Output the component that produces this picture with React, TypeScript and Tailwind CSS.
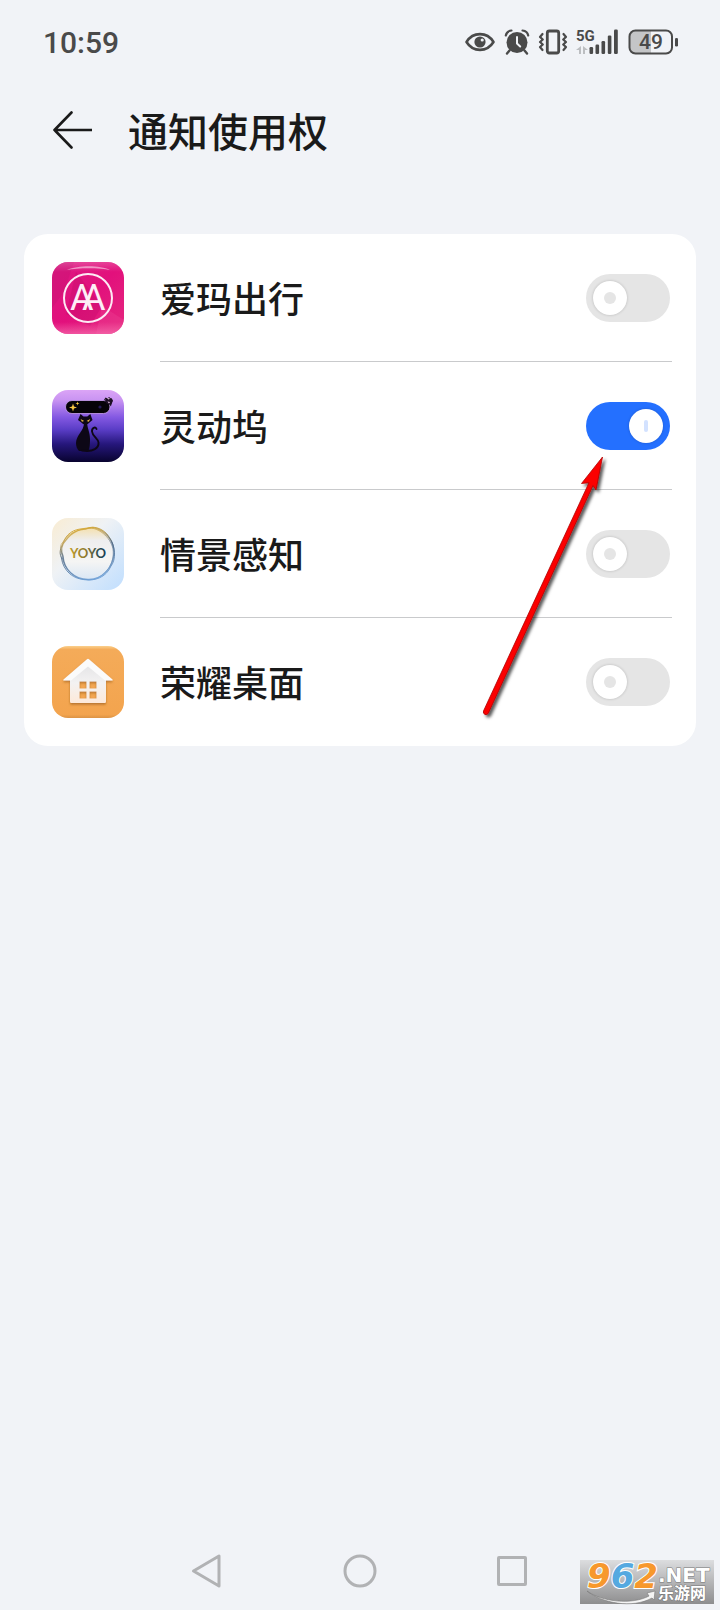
import React, { useState } from 'react';

interface AppEntry {
  id: string;
  name: string;
  icon: React.FC;
}

const AimaIcon: React.FC = () => (
  <svg viewBox="0 0 72 72" className="size-18 shrink-0" aria-hidden="true">
    <defs>
      <linearGradient id="aima-bg" x1="0" y1="0" x2="1" y2="1">
        <stop offset="0" stopColor="#dc1a82" />
        <stop offset="0.5" stopColor="#e2107c" />
        <stop offset="1" stopColor="#e5287f" />
      </linearGradient>
      <linearGradient id="aima-shine" x1="0" y1="0" x2="0" y2="1">
        <stop offset="0" stopColor="#fff" stopOpacity="0.2" />
        <stop offset="1" stopColor="#fff" stopOpacity="0" />
      </linearGradient>
      <linearGradient id="aima-base" x1="0" y1="0" x2="0" y2="1">
        <stop offset="0" stopColor="#f97cb6" stopOpacity="0" />
        <stop offset="1" stopColor="#f97cb6" stopOpacity="0.6" />
      </linearGradient>
      <clipPath id="aima-clip">
        <rect width="72" height="72" rx="16" />
      </clipPath>
    </defs>
    <g clipPath="url(#aima-clip)">
      <rect width="72" height="72" fill="url(#aima-bg)" />
      <path d="M0 0h22L12 30 0 46z" fill="#c4106f" opacity="0.35" />
      <path d="M24 10L50 44 38 64 14 52z" fill="#c60c6b" opacity="0.4" />
      <path d="M50 44l22 14v14H44z" fill="#f04a98" opacity="0.3" />
      <path d="M15 8C26 3 48 3 58 8 48 5.500 26 5.500 15 8z" fill="#fff" opacity="0.5" />
      <rect y="60" width="72" height="12" fill="url(#aima-base)" />
      <rect width="72" height="10" fill="url(#aima-shine)" />
    </g>
    <circle cx="36" cy="36" r="24" fill="none" stroke="#fdeaf4" strokeWidth="2" />
    <text y="48" fill="#fdeef6" fontFamily="Roboto, sans-serif" fontSize="36" fontWeight="400">
      <tspan x="18">A</tspan>
      <tspan x="30">A</tspan>
    </text>
  </svg>
);

const DockIcon: React.FC = () => (
  <svg viewBox="0 0 72 72" className="size-18 shrink-0" aria-hidden="true">
    <defs>
      <linearGradient id="dock-bg" x1="0" y1="0" x2="0" y2="1">
        <stop offset="0" stopColor="#dba4f6" />
        <stop offset="0.14" stopColor="#c994f2" />
        <stop offset="0.38" stopColor="#8358e2" />
        <stop offset="0.55" stopColor="#5a3dc6" />
        <stop offset="0.75" stopColor="#26177c" />
        <stop offset="1" stopColor="#08032f" />
      </linearGradient>
    </defs>
    <rect width="72" height="72" rx="16" fill="url(#dock-bg)" />
    <path d="M52 10l1.500-2.500 2 1L57 7l4 3-1 3-1 3-3 1-3-2z" fill="#1c0f24" />
    <path d="M55 10.500l3-.5 1 2-2 1.500-2-1z" fill="#e7c4e4" />
    <rect x="13.500" y="10.500" width="44.500" height="13" rx="6.500" fill="#050308" stroke="#c9a0f3" strokeWidth="0.800" />
    <path d="M53 10l5 1 1-2-3-1z" fill="#e7c4e4" />
    <path d="M53 11l1.500-3 2 1.500L59.500 8l1 3.500-2 3.500-4-1.500z" fill="#1c0f24" />
    <path d="M55.500 11.500l2.500.5-1 1.500z" fill="#e7c4e4" />
    <path d="M21 13.500l1 3 3 1-3 1-1 3-1-3-3-1 3-1z" fill="#f7c744" />
    <path d="M25.500 11.500l.5 1.500 1.500.5-1.500.5-.5 1.500-.5-1.500-1.500-.5 1.500-.5z" fill="#f7c744" />
    <circle cx="48" cy="17" r="1.600" fill="#241a55" />
    {/* cat */}
    <path d="M28.500 24l3 2.500h3.800l3-2.500 2.200 6-3 2.500c-1 1.300-2.500 2-4.100 2s-3.100-.7-4.100-2L26 30z" fill="#0d0716" />
    <path d="M28.500 29l3.700 2-2.200.8zM38.300 29l-3.700 2 2.200.8z" fill="#eab646" />
    <path d="M32 33h3.200c0 5 2.800 9 2.800 16 0 6-.5 9-1.500 12H27c-2-2-3-5-3-8 0-8 8-12 8-20z" fill="#0d0716" />
    <path d="M30 60.500c12 2 17-3 16.500-8-.5-4.500-6-6-6.500-11-.3-3.500 3.500-5.500 4.500-2.500" fill="none" stroke="#0d0716" strokeWidth="1.900" strokeLinecap="round" />
  </svg>
);

const YoyoIcon: React.FC = () => (
  <svg viewBox="0 0 72 72" className="size-18 shrink-0" aria-hidden="true">
    <defs>
      <linearGradient id="yoyo-bg" x1="0" y1="0" x2="1" y2="1">
        <stop offset="0" stopColor="#f9ecd2" />
        <stop offset="0.4" stopColor="#eff2f5" />
        <stop offset="1" stopColor="#c0defe" />
      </linearGradient>
      <linearGradient id="yoyo-ball" x1="0" y1="0" x2="0" y2="1">
        <stop offset="0" stopColor="#f4dfac" />
        <stop offset="0.25" stopColor="#eeeeef" />
        <stop offset="0.65" stopColor="#f5f5f4" />
        <stop offset="1" stopColor="#dae7f5" />
      </linearGradient>
      <linearGradient id="yoyo-ring" x1="0.3" y1="0" x2="0.6" y2="1">
        <stop offset="0" stopColor="#d9a829" />
        <stop offset="0.22" stopColor="#b99b52" />
        <stop offset="0.45" stopColor="#4c6683" />
        <stop offset="1" stopColor="#6d9fd6" />
      </linearGradient>
      <linearGradient id="yoyo-text" x1="0" y1="0" x2="1" y2="0">
        <stop offset="0" stopColor="#c29e2c" />
        <stop offset="0.5" stopColor="#877430" />
        <stop offset="0.75" stopColor="#35504e" />
        <stop offset="1" stopColor="#163b53" />
      </linearGradient>
    </defs>
    <rect width="72" height="72" rx="16" fill="url(#yoyo-bg)" />
    <circle cx="36" cy="35.500" r="26" fill="url(#yoyo-ball)" />
    <g fill="none" stroke="url(#yoyo-ring)">
      <path d="M12 23C16 13 26 10 34 11 40 7 52 10 57 19 64 28 64 42 59 48 54 60 42 63 34 61.500 22 62 11 53 9.500 40 6 33 10 28 12 23z" strokeWidth="0.900" />
      <path d="M14 22C22 11 30 12 41 9.500 54 12 62 23 62 35 61 50 50 62 36 61.500 22 61 12 52 11 38 8 31 10 26 14 22z" strokeWidth="1.300" opacity="0.8" />
      <path d="M11 24C16 15 24 13 32 10.500 46 7 59 20 61 31 63 45 54 58 41 61.500 26 65 11 52 10 37 8 30 8 27 11 24z" strokeWidth="0.800" opacity="0.8" />
    </g>
    <text x="36" y="40" textAnchor="middle" fill="url(#yoyo-text)" fontFamily="Lato, sans-serif" fontSize="13" fontWeight="700">YOYO</text>
  </svg>
);

const HomeIcon: React.FC = () => (
  <svg viewBox="0 0 72 72" className="size-18 shrink-0" aria-hidden="true">
    <defs>
      <linearGradient id="home-body" x1="0" y1="0" x2="0" y2="1">
        <stop offset="0" stopColor="#e3e3e5" />
        <stop offset="0.5" stopColor="#f3f2f2" />
        <stop offset="1" stopColor="#fde9d9" />
      </linearGradient>
      <linearGradient id="home-bg" x1="0" y1="0" x2="0" y2="1">
        <stop offset="0" stopColor="#fbd08c" />
        <stop offset="0.05" stopColor="#f4ab59" />
        <stop offset="0.95" stopColor="#f3a44e" />
        <stop offset="1" stopColor="#dc9345" />
      </linearGradient>
      <filter id="home-shadow" x="-20%" y="-20%" width="140%" height="140%">
        <feDropShadow dx="0" dy="1.500" stdDeviation="1" floodColor="#8a5010" floodOpacity="0.6" />
      </filter>
    </defs>
    <rect width="72" height="72" rx="16" fill="url(#home-bg)" />
    <g filter="url(#home-shadow)">
      <path fillRule="evenodd" fill="url(#home-body)" d="M36 17L18 32v23.500q0 1.500 1.500 1.500h33q1.500 0 1.500-1.500V32zM27.500 35.500h7v7h-7zM37.500 35.500h7v7h-7zM27.500 45.500h7v7h-7zM37.500 45.500h7v7h-7z" />
      <path d="M35 13.200q1-.8 2 0L60.500 33.500q1 1-.5 1H53L36 20.500 19 34.500h-7q-1.500 0-.5-1z" fill="#fbfbfb" />
    </g>
  </svg>
);

const apps: AppEntry[] = [
  { id: 'aima', name: '爱玛出行', icon: AimaIcon },
  { id: 'dock', name: '灵动坞', icon: DockIcon },
  { id: 'scene', name: '情景感知', icon: YoyoIcon },
  { id: 'launcher', name: '荣耀桌面', icon: HomeIcon },
];

const StatusBar: React.FC = () => (
  <header className="flex h-21 items-center justify-between pr-10 pl-[43px] text-[#4a4a4a]">
    <time className="pt-0.5 font-['Roboto',sans-serif] text-3xl font-medium">10:59</time>
    <div className="flex items-center gap-2">
      <svg viewBox="0 0 32 26" className="h-[26px] w-8" aria-label="护眼模式" role="img">
        <path d="M2.500 13C9 2.500 23 2.500 29.500 13 23 23.500 9 23.500 2.500 13z" fill="none" stroke="currentColor" strokeWidth="2.600" strokeLinejoin="round" />
        <circle cx="16" cy="13" r="5.600" fill="currentColor" />
        <circle cx="18.200" cy="11" r="1.600" fill="#f1f3f7" />
      </svg>
      <svg viewBox="0 0 26 26" className="size-[26px]" aria-label="闹钟" role="img">
        <circle cx="13" cy="13.500" r="10.500" fill="currentColor" />
        <path d="M1.800 6.500C2.300 3.800 4.500 1.800 7.500 1.500M24.200 6.500C23.700 3.800 21.500 1.800 18.500 1.500" fill="none" stroke="currentColor" strokeWidth="2.200" strokeLinecap="round" />
        <path d="M5.500 21.500L3 24.500M20.500 21.500l2.500 3" stroke="currentColor" strokeWidth="2.400" strokeLinecap="round" />
        <path d="M13 8v6.500l3.200 3" fill="none" stroke="#f1f3f7" strokeWidth="2" strokeLinecap="round" strokeLinejoin="round" />
      </svg>
      <svg viewBox="0 0 30 26" className="h-[26px] w-[30px]" aria-label="振动" role="img">
        <rect x="9.300" y="2" width="11.400" height="22" rx="2" fill="none" stroke="currentColor" strokeWidth="2.800" />
        <path d="M4.500 5L2 8l2.800 2.500L2 13l2.800 2.500L2 18l2.500 3M25.500 5L28 8l-2.800 2.500L28 13l-2.800 2.500L28 18l-2.500 3" fill="none" stroke="currentColor" strokeWidth="2.200" strokeLinejoin="round" strokeLinecap="round" />
      </svg>
      <svg viewBox="0 0 42 26" className="h-[26px] w-[42px]" aria-label="5G 信号" role="img">
        <text x="0" y="12" fill="currentColor" fontFamily="Roboto, sans-serif" fontSize="15" fontWeight="700">5G</text>
        <path d="M0 21l5-4v8H3v-4zM12 21l-5-4v8h2v-4z" fill="#bcbec1" />
        <g fill="currentColor">
          <rect x="13.500" y="18" width="3.600" height="7" rx="1.200" />
          <rect x="19.500" y="15.500" width="3.600" height="9.500" rx="1.200" />
          <rect x="25.500" y="12" width="3.600" height="13" rx="1.200" />
          <rect x="31.800" y="6.500" width="3.600" height="18.500" rx="1.200" />
          <rect x="38" y="0.500" width="3.800" height="24.500" rx="1.200" />
        </g>
      </svg>
      <svg viewBox="0 0 52 26" className="ml-0.5 h-[26px] w-[52px]" aria-label="电量 49%" role="img">
        <path d="M7 1.500h16v23H7q-5.500 0-5.500-5.500V7q0-5.500 5.500-5.500z" fill="#c4c5c7" />
        <rect x="1.500" y="1.500" width="42.500" height="23" rx="6" fill="none" stroke="currentColor" strokeWidth="2" />
        <rect x="47" y="9" width="3" height="8.500" rx="1.300" fill="currentColor" />
        <text x="23" y="20" textAnchor="middle" fill="currentColor" fontFamily="Roboto, sans-serif" fontSize="21" fontWeight="500">49</text>
      </svg>
    </div>
  </header>
);

const Watermark: React.FC = () => (
  <svg viewBox="0 0 134 44" className="absolute right-1.5 bottom-1.5 h-11 w-[134px] overflow-visible" role="img" aria-label="962.NET 乐游网">
    <defs>
      <linearGradient id="wm-bg" x1="0" y1="0" x2="0" y2="1">
        <stop offset="0" stopColor="#dcdddf" />
        <stop offset="1" stopColor="#8e8e8f" />
      </linearGradient>
    </defs>
    <rect width="134" height="44" fill="url(#wm-bg)" />
    <text x="7" y="28" fontFamily="'DejaVu Sans', sans-serif" fontSize="34" fontWeight="700" fontStyle="italic" fill="#f7982c" stroke="#fff" strokeWidth="2" paintOrder="stroke">
      9<tspan fill="#55a9e0">6</tspan>2
    </text>
    <path d="M7 31c15 11 45 14 62 5l-2-3 8-2-1 9-2-2C52 49 22 43 7 31z" fill="#f4f4f4" stroke="#777" strokeWidth="0.600" />
    <text fill="#fff" stroke="#777" strokeWidth="1" paintOrder="stroke" fontWeight="700">
      <tspan x="78" y="22" fontFamily="'DejaVu Sans', sans-serif" fontSize="20">.NET</tspan>
      <tspan x="78" y="39" fontFamily="'Noto Sans CJK SC', sans-serif" fontSize="16">乐游网</tspan>
    </text>
  </svg>
);

const PointerArrow: React.FC = () => (
  <svg viewBox="0 0 140 280" className="pointer-events-none absolute top-[216px] right-20 h-[280px] w-[140px]" aria-hidden="true">
    <defs>
      <filter id="arrow-shadow" x="-10%" y="-10%" width="130%" height="120%">
        <feDropShadow dx="2.500" dy="2.500" stdDeviation="1.800" floodColor="#000" floodOpacity="0.65" />
      </filter>
    </defs>
    <path
      d="M126.500 7L105.500 33.500l7.500-.8L7.500 261q-.8 2.500 1.500 3.500 2 .5 3.200-1L117 35.500l3 4.500z"
      fill="#fb0505"
      stroke="#b00808"
      strokeWidth="0.800"
      filter="url(#arrow-shadow)"
    />
  </svg>
);

const App: React.FC = () => {
  const [enabled, setEnabled] = useState<Record<string, boolean>>({ dock: true });

  const toggle = (id: string) => {
    setEnabled((prev) => ({ ...prev, [id]: !prev[id] }));
  };

  return (
    <div className="flex min-h-screen flex-col bg-[#f1f3f7] font-['Noto_Sans_CJK_SC',sans-serif] text-[#1a1a1a]">
      <StatusBar />

      <div className="flex h-23 items-center gap-9 px-[52px]">
        <button type="button" aria-label="返回">
          <svg viewBox="0 0 40 40" className="size-10" fill="none" stroke="currentColor" strokeWidth="2.600" strokeLinecap="round" strokeLinejoin="round">
            <path d="M19.500 2.500L2.500 20l17 17.500M2.500 20h37" />
          </svg>
        </button>
        <h1 className="text-[40px] leading-none font-medium">通知使用权</h1>
      </div>

      <main className="relative mx-6 mt-[58px] rounded-[24px] bg-white">
        <ul>
          {apps.map(({ id, name, icon: Icon }, index) => (
            <li key={id}>
              <label className="flex h-32 items-center gap-9 pl-7">
                <Icon />
                <span
                  className={`mr-6 flex h-full flex-1 items-center justify-between pr-0.5 ${
                    index < apps.length - 1 ? 'border-b border-[#c9cacc]' : ''
                  }`}
                >
                  <span className="pb-0.5 text-4xl font-medium">{name}</span>
                  <input
                    type="checkbox"
                    role="switch"
                    checked={!!enabled[id]}
                    onChange={() => toggle(id)}
                    className="relative h-12 w-[84px] appearance-none rounded-full bg-[#e5e5e5] before:absolute before:top-[7px] before:left-[7px] before:size-[34px] before:rounded-full before:bg-white before:shadow-[0_0_3px_rgba(0,0,0,0.2)] after:absolute after:top-[18px] after:left-[18px] after:size-3 after:rounded-full after:bg-[#e5e5e5] checked:bg-[#2470ff] checked:before:left-[43px] checked:after:left-[58px] checked:after:w-1 checked:after:bg-[#d3e2ff]"
                  />
                </span>
              </label>
            </li>
          ))}
        </ul>
        <PointerArrow />
      </main>

      <nav className="relative mt-auto flex h-[78px] items-center justify-center gap-[104px] text-[#b1b2b4]">
        <button type="button" aria-label="返回上一页" className="flex size-12 items-center justify-center">
          <svg viewBox="0 0 36 36" className="size-9" fill="none" stroke="currentColor" strokeWidth="3" strokeLinejoin="round">
            <path d="M29 3v30L3.500 18z" />
          </svg>
        </button>
        <button type="button" aria-label="主屏幕" className="flex size-12 items-center justify-center">
          <svg viewBox="0 0 36 36" className="size-9" fill="none" stroke="currentColor" strokeWidth="3">
            <circle cx="18" cy="18" r="15" />
          </svg>
        </button>
        <button type="button" aria-label="最近任务" className="flex size-12 items-center justify-center">
          <svg viewBox="0 0 36 36" className="size-9" fill="none" stroke="currentColor" strokeWidth="3" strokeLinejoin="round">
            <rect x="4.500" y="4.500" width="27" height="27" rx="0.500" />
          </svg>
        </button>
        <Watermark />
      </nav>
    </div>
  );
};

export default App;
